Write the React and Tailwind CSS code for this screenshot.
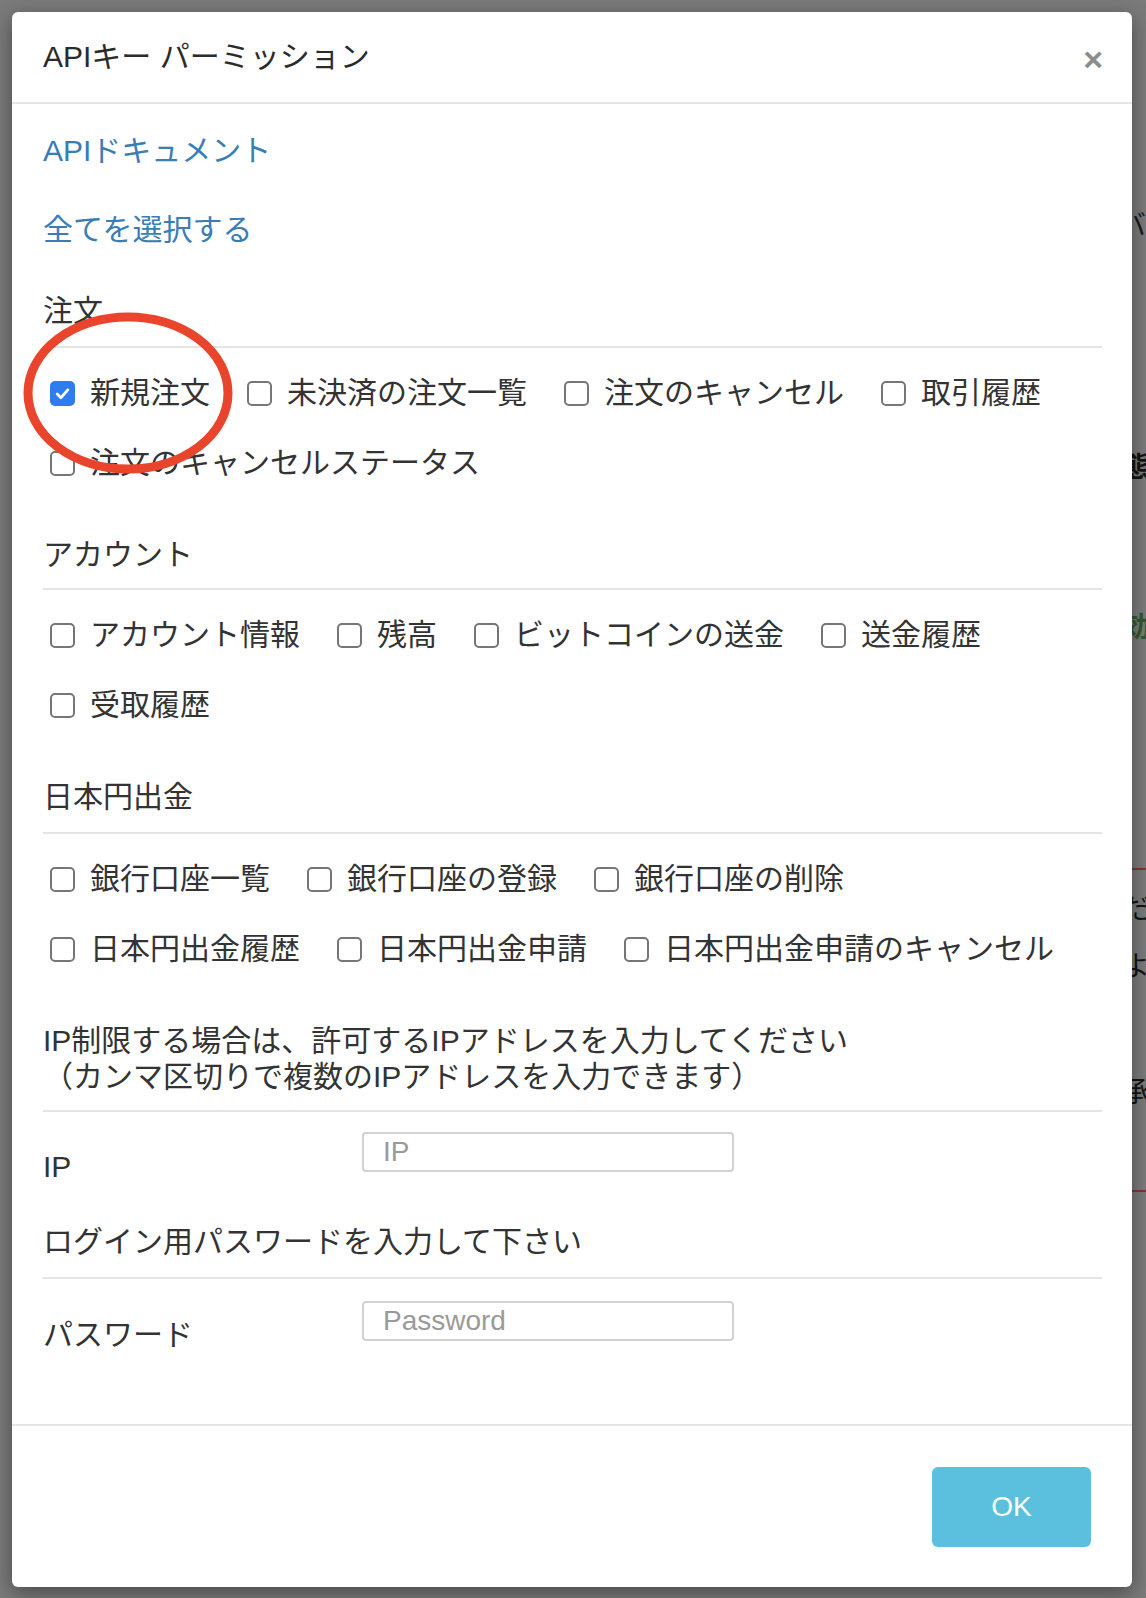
import React from "react";

function Box({ checked }) {
  if (checked) {
    return (
      <span className="w-[25px] h-[25px] rounded-[5px] bg-[#2f7bf0] flex items-center justify-center shrink-0">
        <svg width="17" height="17" viewBox="0 0 16 16" fill="none">
          <path d="M3 8.5 L6.5 12 L13 4.5" stroke="white" strokeWidth="2.6" strokeLinecap="round" strokeLinejoin="round" />
        </svg>
      </span>
    );
  }
  return <span className="w-[25px] h-[25px] rounded-[5px] border-2 border-[#767676] bg-white shrink-0" />;
}

function Item({ label, checked }) {
  return (
    <div className="flex items-center h-[40px]">
      <Box checked={checked} />
      <span className="ml-[15px] leading-[36px]">{label}</span>
    </div>
  );
}

function Section({ title, items, topClass, padClass }) {
  return (
    <div className={topClass}>
      <div className={"leading-[36px] border-b-2 border-[#e5e5e5] " + padClass}>{title}</div>
      <div className="pt-[25px] pl-[7px] flex flex-wrap gap-x-[37px] gap-y-[30px]">
        {items.map((it) => (
          <Item key={it.label} label={it.label} checked={it.checked} />
        ))}
      </div>
    </div>
  );
}

export default function App() {
  return (
    <div className="relative w-[1146px] h-[1598px] overflow-hidden bg-[#7a7a7a] font-['Liberation_Sans','Noto_Sans_CJK_JP',sans-serif] text-[30px] text-[#333333]">
      {/* underlying page fragments (behind overlay) */}
      <div className="absolute left-[1118px] top-[210px] text-[28px] leading-[32px] text-[#1a1a1a]">バ</div>
      <div className="absolute left-[1122px] top-[452px] text-[28px] leading-[32px] font-bold text-[#141414]">態</div>
      <div className="absolute left-[1122px] top-[612px] text-[28px] leading-[32px] font-bold text-[#2f5a2f]">効</div>
      <div className="absolute left-[1132px] top-[868px] w-[14px] h-[2px] bg-[#7a3a30]" />
      <div className="absolute left-[1122px] top-[894px] text-[28px] leading-[32px] text-[#141414]">だ</div>
      <div className="absolute left-[1122px] top-[951px] text-[28px] leading-[32px] text-[#141414]">よ</div>
      <div className="absolute left-[1122px] top-[1077px] text-[28px] leading-[32px] text-[#141414]">承</div>
      <div className="absolute left-[1132px] top-[1190px] w-[14px] h-[2px] bg-[#7a3a30]" />

      {/* modal */}
      <div className="relative z-10 ml-[12px] mt-[12px] w-[1120px] h-[1575px] bg-white rounded-[6px] shadow-[0_6px_20px_rgba(0,0,0,0.4)] flex flex-col">
        <div className="h-[92px] shrink-0 px-[31px] pr-[29px] flex items-center justify-between border-b-2 border-[#e5e5e5]">
          <div className="leading-[36px] text-[#2b2b2b]">APIキー パーミッション</div>
          <div className="text-[34px] font-bold leading-none text-[#8c8c8c] pt-[4px]">×</div>
        </div>

        <div className="flex-1 pl-[31px] pr-[30px] pt-[29px]">
          <div className="leading-[36px] text-[#3a7db6]">APIドキュメント</div>
          <div className="mt-[43px] leading-[36px] text-[#3a7db6]">全てを選択する</div>

          <Section
            topClass="mt-[45px]"
            padClass="pb-[17px]"
            title="注文"
            items={[
              { label: "新規注文", checked: true },
              { label: "未決済の注文一覧" },
              { label: "注文のキャンセル" },
              { label: "取引履歴" },
              { label: "注文のキャンセルステータス" },
            ]}
          />
          <Section
            topClass="mt-[54px]"
            padClass="pb-[15px]"
            title="アカウント"
            items={[
              { label: "アカウント情報" },
              { label: "残高" },
              { label: "ビットコインの送金" },
              { label: "送金履歴" },
              { label: "受取履歴" },
            ]}
          />
          <Section
            topClass="mt-[54px]"
            padClass="pb-[17px]"
            title="日本円出金"
            items={[
              { label: "銀行口座一覧" },
              { label: "銀行口座の登録" },
              { label: "銀行口座の削除" },
              { label: "日本円出金履歴" },
              { label: "日本円出金申請" },
              { label: "日本円出金申請のキャンセル" },
            ]}
          />

          <div className="mt-[54px] leading-[36px] pb-[15px] border-b-2 border-[#e5e5e5]">
            <div>IP制限する場合は、許可するIPアドレスを入力してください</div>
            <div>（カンマ区切りで複数のIPアドレスを入力できます）</div>
          </div>
          <div className="mt-[20px] flex items-start">
            <div className="w-[319px] pt-[17px] leading-[36px]">IP</div>
            <div className="w-[372px] h-[40px] border-2 border-[#d2d2d2] rounded-[4px] flex items-center pl-[19px] text-[28px] text-[#9a9a9a]">
              IP
            </div>
          </div>

          <div className="mt-[39px] leading-[36px] pb-[17px] border-b-2 border-[#e5e5e5]">ログイン用パスワードを入力して下さい</div>
          <div className="mt-[22px] flex items-start">
            <div className="w-[319px] pt-[16px] leading-[36px]">パスワード</div>
            <div className="w-[372px] h-[40px] border-2 border-[#d2d2d2] rounded-[4px] flex items-center pl-[19px] text-[28px] text-[#9a9a9a]">
              Password
            </div>
          </div>
        </div>

        <div className="h-[163px] shrink-0 border-t-2 border-[#e5e5e5] flex items-center justify-end pr-[41px]">
          <div className="w-[159px] h-[80px] rounded-[6px] bg-[#5bc0de] flex items-center justify-center text-white text-[28px]">
            OK
          </div>
        </div>
      </div>

      {/* red annotation */}
      <svg className="absolute left-0 top-0 z-20 pointer-events-none" width="1146" height="1598">
        <ellipse cx="128" cy="393" rx="100" ry="76" fill="none" stroke="#e9452c" strokeWidth="9" />
      </svg>
    </div>
  );
}
